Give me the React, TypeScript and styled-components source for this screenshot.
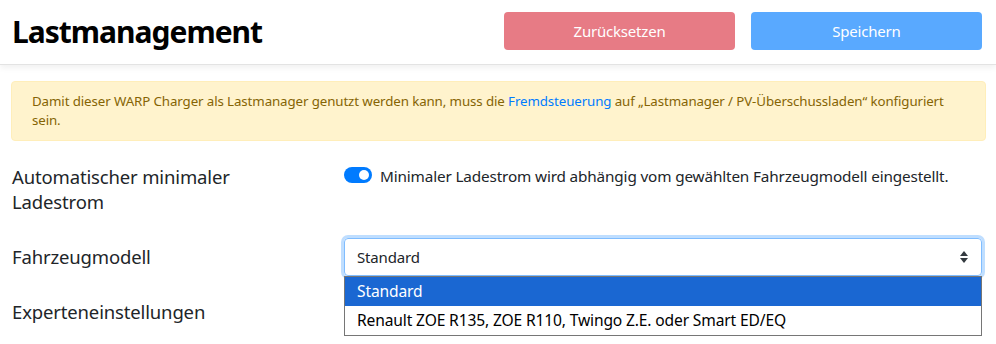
import React from "react"
import styled, { createGlobalStyle } from "styled-components"

const GlobalStyle = createGlobalStyle`
    html, body {
        margin: 0;
        padding: 0;
        background: #fff;
        font-family: "Noto Sans", "Open Sans", sans-serif;
        color: #212529;
    }
`

const Page = styled.div`
    width: 996px;
    height: 344px;
    overflow: hidden;
`

const Header = styled.header`
    display: flex;
    align-items: center;
    justify-content: space-between;
    height: 65px;
    box-sizing: border-box;
    padding: 0 14px 0 12px;
    border-bottom: 1px solid #e3e3e3;
    box-shadow: 0 3px 6px rgba(0, 0, 0, 0.06);
`

const Title = styled.h1`
    margin: 0;
    font-size: 30px;
    font-weight: 700;
    letter-spacing: -1px;
    color: #000;
    padding-bottom: 2px;
`

const Actions = styled.div`
    display: flex;
    gap: 16px;
    margin-top: -2px;
`

const Button = styled.button<{ $variant: "danger" | "primary" }>`
    width: 231px;
    height: 38px;
    border: none;
    border-radius: 4px;
    color: #fff;
    font-family: inherit;
    font-size: 15px;
    letter-spacing: -0.2px;
    background: ${p => (p.$variant === "danger" ? "#e77b85" : "#59a9ff")};
`

const Main = styled.main`
    padding: 16px 10px 0 11px;
`

const Alert = styled.div`
    background: #fff3cd;
    border: 1px solid #ffeeba;
    border-radius: 4px;
    color: #856404;
    font-size: 13.3px;
    line-height: 19px;
    letter-spacing: -0.1px;
    padding: 10px 20px 10px 20px;
    margin-bottom: 16px;

    a {
        color: #007bff;
        text-decoration: none;
    }
`

const Row = styled.div`
    display: grid;
    grid-template-columns: 333px 638px;
    margin-bottom: 16px;
    position: relative;
`

const Label = styled.label`
    padding: 7px 0 7px 1px;
    font-size: 18.5px;
    line-height: 25px;
    letter-spacing: -0.15px;
    width: 260px;
`

const Field = styled.div`
    padding-top: 7px;
    display: flex;
    align-items: flex-start;
    gap: 8px;
    font-size: 15.3px;
    line-height: 24px;
    letter-spacing: -0.15px;
`

const Switch = styled.span`
    flex: none;
    margin-top: 3px;
    width: 28px;
    height: 16px;
    border-radius: 8px;
    background: #007bff;
    position: relative;

    &::after {
        content: "";
        position: absolute;
        right: 3px;
        top: 3px;
        width: 10px;
        height: 10px;
        border-radius: 50%;
        background: #fff;
    }
`

const SelectWrap = styled.div`
    position: relative;
    margin-top: 1px;
`

const Select = styled.div`
    height: 38px;
    box-sizing: border-box;
    border: 1px solid #80bdff;
    border-radius: 4px;
    box-shadow: 0 0 0 3px rgba(0, 123, 255, 0.25);
    display: flex;
    align-items: center;
    justify-content: space-between;
    padding: 0 12px;
    font-size: 15px;
    letter-spacing: -0.15px;
    color: #212529;
`

const Dropdown = styled.ul`
    position: absolute;
    left: 0;
    right: 0;
    top: 38px;
    margin: 0;
    padding: 0;
    list-style: none;
    background: #fff;
    border: 1px solid #767676;
    z-index: 5;
`

const Option = styled.li<{ $selected?: boolean }>`
    height: 29px;
    line-height: 29px;
    padding: 0 12px;
    font-size: 15.6px;
    letter-spacing: -0.15px;
    background: ${p => (p.$selected ? "#1a67d2" : "#fff")};
    color: ${p => (p.$selected ? "#fff" : "#000")};
`

const Arrows = () => (
    <svg width="10" height="14" viewBox="0 0 10 14">
        <path d="M5 1 L9 6 H1 Z" fill="#343a40" />
        <path d="M5 13 L9 8 H1 Z" fill="#343a40" />
    </svg>
)

export default function App() {
    return (
        <Page>
            <GlobalStyle />
            <Header>
                <Title>Lastmanagement</Title>
                <Actions>
                    <Button $variant="danger">Zurücksetzen</Button>
                    <Button $variant="primary">Speichern</Button>
                </Actions>
            </Header>
            <Main>
                <Alert>
                    Damit dieser WARP Charger als Lastmanager genutzt werden kann, muss die{" "}
                    <a href="#">Fremdsteuerung</a> auf „Lastmanager / PV-Überschussladen“ konfiguriert sein.
                </Alert>
                <Row>
                    <Label>Automatischer minimaler Ladestrom</Label>
                    <Field>
                        <Switch />
                        Minimaler Ladestrom wird abhängig vom gewählten Fahrzeugmodell eingestellt.
                    </Field>
                </Row>
                <Row>
                    <Label>Fahrzeugmodell</Label>
                    <SelectWrap>
                        <Select>
                            Standard
                            <Arrows />
                        </Select>
                        <Dropdown>
                            <Option $selected>Standard</Option>
                            <Option>Renault ZOE R135, ZOE R110, Twingo Z.E. oder Smart ED/EQ</Option>
                        </Dropdown>
                    </SelectWrap>
                </Row>
                <Row>
                    <Label>Experteneinstellungen</Label>
                </Row>
            </Main>
        </Page>
    )
}
